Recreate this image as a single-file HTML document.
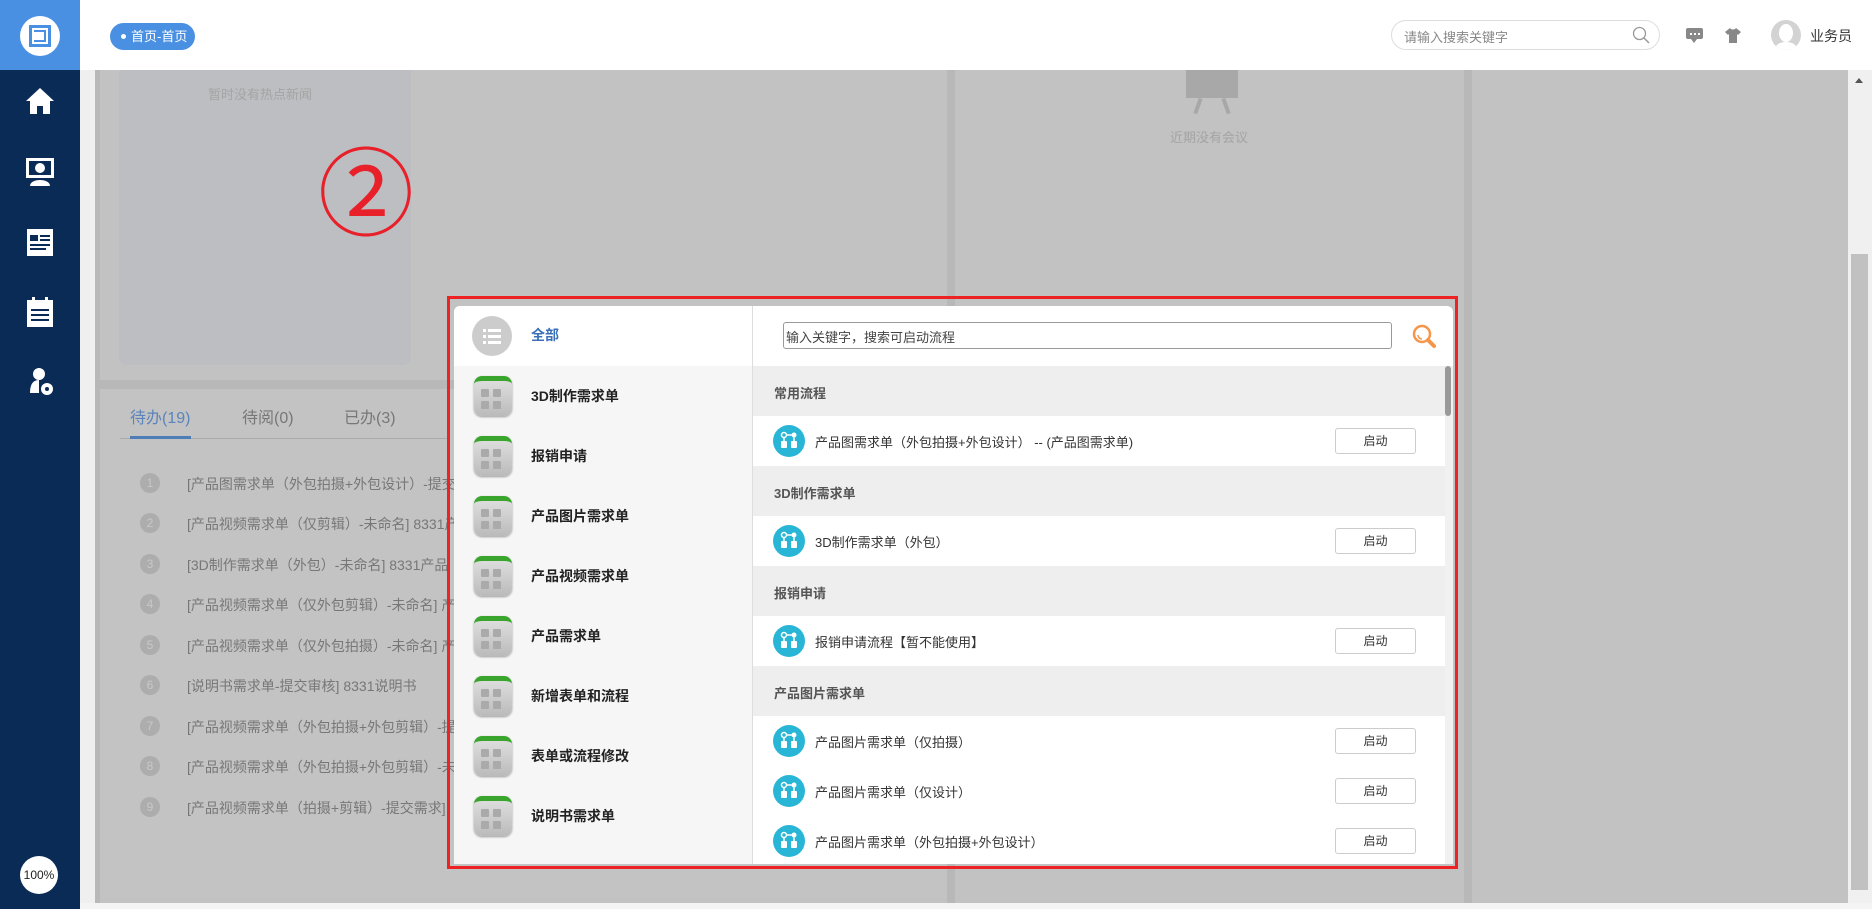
<!DOCTYPE html>
<html><head><meta charset="utf-8"><style>
*{margin:0;padding:0;box-sizing:border-box}
body{width:1872px;height:909px;overflow:hidden;position:relative;background:#fff;font-family:"Liberation Sans","Noto Sans CJK SC",sans-serif}
.a{position:absolute}
.side{left:0;top:0;width:80px;height:909px;background:#0b2b57}
.logo{left:0;top:0;width:80px;height:70px;background:#4a90e2}
.hdr{left:80px;top:0;width:1792px;height:70px;background:#fff}
.bg{left:80px;top:70px;width:1768px;height:833px;background:#c2c2c2}
.t{white-space:nowrap}
.mrow{left:0;width:298px;height:60px;background:#f6f6f6}
.mrow .ic{position:absolute;left:20px;top:10px;width:38px;height:40px;border-radius:8px;background:linear-gradient(#ddd,#bbb);border-top:5px solid #3aa52c;box-shadow:0 1px 2px #999}
.mrow .ic i{position:absolute;width:8px;height:8px;background:#aaa;border-radius:1px}
.mrow span{position:absolute;left:77px;top:20px;font-size:14px;font-weight:bold;color:#222}
.sh{left:0;width:692px;height:50px;background:#eee;font-size:13px;font-weight:bold;color:#555;padding:17px 0 0 21px}
.it{left:0;width:692px;height:50px;background:#fff}
.it .c{position:absolute;left:20px;top:9px;width:32px;height:32px;border-radius:50%;background:#29b6d6}
.it span{position:absolute;left:62px;top:16px;font-size:13px;color:#333}
.it b{position:absolute;left:582px;top:12px;width:81px;height:26px;border:1px solid #ccc;border-radius:3px;font-weight:normal;font-size:12px;text-align:center;line-height:24px;color:#333}
.li{left:140px;font-size:14px;color:#777}
.li i{position:absolute;left:0;top:-1px;width:20px;height:20px;border-radius:50%;background:#adadad;color:#c8c8c8;font-style:normal;font-size:12px;text-align:center;line-height:20px}
.li span{position:absolute;left:47px;top:0;white-space:nowrap}
</style></head><body>
<svg width="0" height="0" style="position:absolute"><defs><g id="fl"><circle cx="11" cy="10" r="2.5" fill="none" stroke="#fff" stroke-width="1.5"/><circle cx="21" cy="10" r="2.5" fill="#fff"/><path d="M11 12.5v4M21 12.5v4M13.5 10h5" stroke="#fff" stroke-width="1.5"/><rect x="8" y="16" width="6" height="7" rx="1" fill="#fff"/><rect x="18" y="16" width="6" height="7" rx="1" fill="#fff"/></g></defs></svg>
<div class="a bg"></div>
<div class="a" style="left:80px;top:70px;width:15px;height:839px;background:#efefef"></div>
<div class="a" style="left:1848px;top:70px;width:24px;height:839px;background:#f0f0f0"></div>
<div class="a" style="left:1851px;top:254px;width:17px;height:636px;background:#c1c1c1"></div>
<div class="a" style="left:1855px;top:78px;border:4px solid transparent;border-bottom:5px solid #555;border-top:0"></div>
<div class="a" style="left:0;top:903px;width:1872px;height:6px;background:#f4f4f4"></div>
<div class="a" style="left:95px;top:70px;width:5px;height:833px;background:#b8b8b8"></div>
<div class="a" style="left:119px;top:70px;width:292px;height:295px;background:#bdbec2;border-radius:0 0 8px 8px"></div>
<div class="a t" style="left:208px;top:84px;font-size:13px;color:#a4a4a4">暂时没有热点新闻</div>
<div class="a t" style="left:318px;top:148px;font-size:96px;line-height:96px;color:#e8202a">②</div>
<div class="a" style="left:947px;top:70px;width:8px;height:833px;background:#b8b8b8"></div>
<div class="a" style="left:1464px;top:70px;width:8px;height:833px;background:#b8b8b8"></div>
<div class="a" style="left:1186px;top:70px;width:52px;height:28px;background:#a8a8a8"></div>
<div class="a" style="left:1196px;top:98px;width:4px;height:16px;background:#a8a8a8;transform:rotate(20deg)"></div>
<div class="a" style="left:1224px;top:98px;width:4px;height:16px;background:#a8a8a8;transform:rotate(-20deg)"></div>
<div class="a t" style="left:1170px;top:127px;font-size:13px;color:#a4a4a4">近期没有会议</div>
<div class="a" style="left:95px;top:380px;width:852px;height:9px;background:#b8b8b8"></div>
<div class="a" style="left:100px;top:389px;width:847px;height:508px;background:#c3c3c3"></div>
<div class="a" style="left:120px;top:438px;width:330px;height:1px;background:#aaa"></div>
<div class="a" style="left:130px;top:436px;width:61px;height:3px;background:#4f7db8"></div>
<div class="a t" style="left:130px;top:404px;font-size:16px;color:#5a84bb">待办(19)</div>
<div class="a t" style="left:242px;top:404px;font-size:16px;color:#777">待阅(0)</div>
<div class="a t" style="left:344px;top:404px;font-size:16px;color:#777">已办(3)</div>
<div class="a li" style="top:474px"><i>1</i><span>[产品图需求单（外包拍摄+外包设计）-提交</span></div>
<div class="a li" style="top:514px"><i>2</i><span>[产品视频需求单（仅剪辑）-未命名] 8331产</span></div>
<div class="a li" style="top:555px"><i>3</i><span>[3D制作需求单（外包）-未命名] 8331产品</span></div>
<div class="a li" style="top:595px"><i>4</i><span>[产品视频需求单（仅外包剪辑）-未命名] 产</span></div>
<div class="a li" style="top:636px"><i>5</i><span>[产品视频需求单（仅外包拍摄）-未命名] 产</span></div>
<div class="a li" style="top:676px"><i>6</i><span>[说明书需求单-提交审核] 8331说明书</span></div>
<div class="a li" style="top:717px"><i>7</i><span>[产品视频需求单（外包拍摄+外包剪辑）-提</span></div>
<div class="a li" style="top:757px"><i>8</i><span>[产品视频需求单（外包拍摄+外包剪辑）-未</span></div>
<div class="a li" style="top:798px"><i>9</i><span>[产品视频需求单（拍摄+剪辑）-提交需求]</span></div>
<div class="a side"></div>
<div class="a logo"></div>
<div class="a" style="left:20px;top:16px;width:40px;height:40px;border-radius:50%;background:#fff"></div>
<div class="a" style="left:29px;top:25px;width:22px;height:22px;border:3px solid #4a90e2"></div>
<div class="a" style="left:34px;top:30px;width:12px;height:12px;border:2px solid #4a90e2;border-left:0"></div>
<svg class="a" style="left:24px;top:86px" width="32" height="30" viewBox="0 0 32 30"><path d="M16 2L2 15h4v13h7v-8h6v8h7V15h4z" fill="#fff"/></svg>
<svg class="a" style="left:25px;top:156px" width="30" height="32" viewBox="0 0 30 32"><rect x="1" y="2" width="28" height="20" fill="#fff"/><rect x="4" y="5" width="22" height="14" fill="#0b2b57"/><circle cx="15" cy="12" r="5" fill="#fff"/><path d="M5 30c0-8 20-8 20 0z" fill="#fff"/></svg>
<svg class="a" style="left:26px;top:226px" width="28" height="32" viewBox="0 0 28 32"><rect x="1" y="3" width="26" height="27" fill="#fff"/><rect x="4" y="9" width="8" height="6" fill="#0b2b57"/><path d="M14 10h10M14 14h10M4 19h20M4 23h16" stroke="#0b2b57" stroke-width="2"/></svg>
<svg class="a" style="left:26px;top:296px" width="28" height="32" viewBox="0 0 28 32"><rect x="1" y="4" width="26" height="27" fill="#fff"/><rect x="6" y="1" width="3" height="6" fill="#fff"/><rect x="19" y="1" width="3" height="6" fill="#fff"/><g fill="#0b2b57"><rect x="5" y="13" width="18" height="2"/><rect x="5" y="18" width="18" height="2"/><rect x="5" y="23" width="18" height="2"/></g></svg>
<svg class="a" style="left:28px;top:366px" width="28" height="32" viewBox="0 0 28 32"><circle cx="11" cy="8" r="6" fill="#fff"/><path d="M2 27c0-10 4-13 9-13v13z" fill="#fff"/><circle cx="19" cy="23" r="6" fill="#fff"/><circle cx="19" cy="23" r="2" fill="#0b2b57"/></svg>
<div class="a" style="left:20px;top:856px;width:38px;height:38px;border-radius:50%;background:#fff;font-size:12px;text-align:center;line-height:38px;color:#222">100%</div>
<div class="a hdr"></div>
<div class="a t" style="left:110px;top:23px;width:85px;height:27px;border-radius:14px;background:#4a90e2;color:#fff;font-size:13px;line-height:27px;padding-left:21px">首页-首页</div>
<div class="a" style="left:121px;top:34px;width:5px;height:5px;border-radius:50%;background:#fff"></div>
<div class="a" style="left:1391px;top:20px;width:269px;height:30px;border:1px solid #ddd;border-radius:15px"></div>
<div class="a t" style="left:1404px;top:27px;font-size:13px;color:#888">请输入搜索关键字</div>
<svg class="a" style="left:1632px;top:26px" width="18" height="18"><circle cx="7.5" cy="7.5" r="6" fill="none" stroke="#999" stroke-width="1.3"/><path d="M12 12l5 5" stroke="#999" stroke-width="1.5"/></svg>
<svg class="a" style="left:1686px;top:28px" width="17" height="15"><rect x="0" y="0" width="17" height="11" rx="2" fill="#888"/><path d="M5 11l3 4 3-4z" fill="#888"/><g fill="#fff"><rect x="4" y="5" width="2" height="2"/><rect x="8" y="5" width="2" height="2"/><rect x="12" y="5" width="2" height="2"/></g></svg>
<svg class="a" style="left:1725px;top:28px" width="16" height="15"><path d="M5 0L0 4l3 3 1-1v9h8V6l1 1 3-3-5-4c-1 2-5 2-6 0z" fill="#888"/></svg>
<div class="a" style="left:1771px;top:20px;width:30px;height:30px;border-radius:50%;background:#d3d3d3;overflow:hidden"><div class="a" style="left:8px;top:4px;width:14px;height:18px;border-radius:50%;background:#fff"></div><div class="a" style="left:4px;top:22px;width:22px;height:14px;border-radius:50%;background:#fff"></div></div>
<div class="a t" style="left:1810px;top:26px;font-size:14px;color:#333">业务员</div>
<div class="a" style="left:447px;top:296px;width:1011px;height:573px;border:3px solid #ee2222"></div>
<div class="a" style="left:454px;top:306px;width:999px;height:558px;background:#fff;border-radius:6px 6px 0 0;overflow:hidden">
 <div class="a" style="left:0;top:0;width:298px;height:558px;background:#f6f6f6"></div>
 <div class="a" style="left:0;top:0;width:298px;height:60px;background:#fff"></div>
 <div class="a" style="left:18px;top:10px;width:40px;height:40px;border-radius:50%;background:#ccc"></div>
 <svg class="a" style="left:29px;top:21px" width="18" height="18"><g fill="#fff"><rect x="0" y="2" width="3" height="3"/><rect x="5" y="2" width="13" height="3"/><rect x="0" y="8" width="3" height="3"/><rect x="5" y="8" width="13" height="3"/><rect x="0" y="14" width="3" height="3"/><rect x="5" y="14" width="13" height="3"/></g></svg>
 <div class="a t" style="left:77px;top:19px;font-size:14px;font-weight:bold;color:#3a6fb8">全部</div>
 <div class="a mrow" style="top:60px"><div class="ic"><i style="left:7px;top:8px"></i><i style="left:19px;top:8px"></i><i style="left:7px;top:20px"></i><i style="left:19px;top:20px"></i></div><span>3D制作需求单</span></div>
 <div class="a mrow" style="top:120px"><div class="ic"><i style="left:7px;top:8px"></i><i style="left:19px;top:8px"></i><i style="left:7px;top:20px"></i><i style="left:19px;top:20px"></i></div><span>报销申请</span></div>
 <div class="a mrow" style="top:180px"><div class="ic"><i style="left:7px;top:8px"></i><i style="left:19px;top:8px"></i><i style="left:7px;top:20px"></i><i style="left:19px;top:20px"></i></div><span>产品图片需求单</span></div>
 <div class="a mrow" style="top:240px"><div class="ic"><i style="left:7px;top:8px"></i><i style="left:19px;top:8px"></i><i style="left:7px;top:20px"></i><i style="left:19px;top:20px"></i></div><span>产品视频需求单</span></div>
 <div class="a mrow" style="top:300px"><div class="ic"><i style="left:7px;top:8px"></i><i style="left:19px;top:8px"></i><i style="left:7px;top:20px"></i><i style="left:19px;top:20px"></i></div><span>产品需求单</span></div>
 <div class="a mrow" style="top:360px"><div class="ic"><i style="left:7px;top:8px"></i><i style="left:19px;top:8px"></i><i style="left:7px;top:20px"></i><i style="left:19px;top:20px"></i></div><span>新增表单和流程</span></div>
 <div class="a mrow" style="top:420px"><div class="ic"><i style="left:7px;top:8px"></i><i style="left:19px;top:8px"></i><i style="left:7px;top:20px"></i><i style="left:19px;top:20px"></i></div><span>表单或流程修改</span></div>
 <div class="a mrow" style="top:480px"><div class="ic"><i style="left:7px;top:8px"></i><i style="left:19px;top:8px"></i><i style="left:7px;top:20px"></i><i style="left:19px;top:20px"></i></div><span>说明书需求单</span></div>
 <div class="a" style="left:298px;top:0;width:1px;height:558px;background:#ddd"></div>
 <div class="a" style="left:299px;top:0;width:700px;height:558px">
  <div class="a" style="left:30px;top:16px;width:609px;height:27px;border:1px solid #999;border-radius:3px"></div>
  <div class="a t" style="left:33px;top:21px;font-size:13px;color:#444">输入关键字，搜索可启动流程</div>
  <svg class="a" style="left:659px;top:18px" width="26" height="26"><circle cx="10" cy="10" r="8" fill="none" stroke="#f5964a" stroke-width="2.5"/><path d="M6 11a4 4 0 0 0 4 4" fill="none" stroke="#f5964a" stroke-width="1.5"/><path d="M16 16l6 6" stroke="#f5964a" stroke-width="4" stroke-linecap="round"/></svg>
  <div class="a sh" style="top:60px">常用流程</div>
  <div class="a it" style="top:110px"><svg class="c" width="32" height="32"><use href="#fl"/></svg><span>产品图需求单（外包拍摄+外包设计） -- (产品图需求单)</span><b>启动</b></div>
  <div class="a sh" style="top:160px">3D制作需求单</div>
  <div class="a it" style="top:210px"><svg class="c" width="32" height="32"><use href="#fl"/></svg><span>3D制作需求单（外包）</span><b>启动</b></div>
  <div class="a sh" style="top:260px">报销申请</div>
  <div class="a it" style="top:310px"><svg class="c" width="32" height="32"><use href="#fl"/></svg><span>报销申请流程【暂不能使用】</span><b>启动</b></div>
  <div class="a sh" style="top:360px">产品图片需求单</div>
  <div class="a it" style="top:410px"><svg class="c" width="32" height="32"><use href="#fl"/></svg><span>产品图片需求单（仅拍摄）</span><b>启动</b></div>
  <div class="a it" style="top:460px"><svg class="c" width="32" height="32"><use href="#fl"/></svg><span>产品图片需求单（仅设计）</span><b>启动</b></div>
  <div class="a it" style="top:510px"><svg class="c" width="32" height="32"><use href="#fl"/></svg><span>产品图片需求单（外包拍摄+外包设计）</span><b>启动</b></div>
  <div class="a" style="left:692px;top:60px;width:8px;height:498px;background:#f1f1f1"></div>
  <div class="a" style="left:692px;top:60px;width:6px;height:50px;background:#999;border-radius:3px"></div>
 </div>
</div>
</body></html>
